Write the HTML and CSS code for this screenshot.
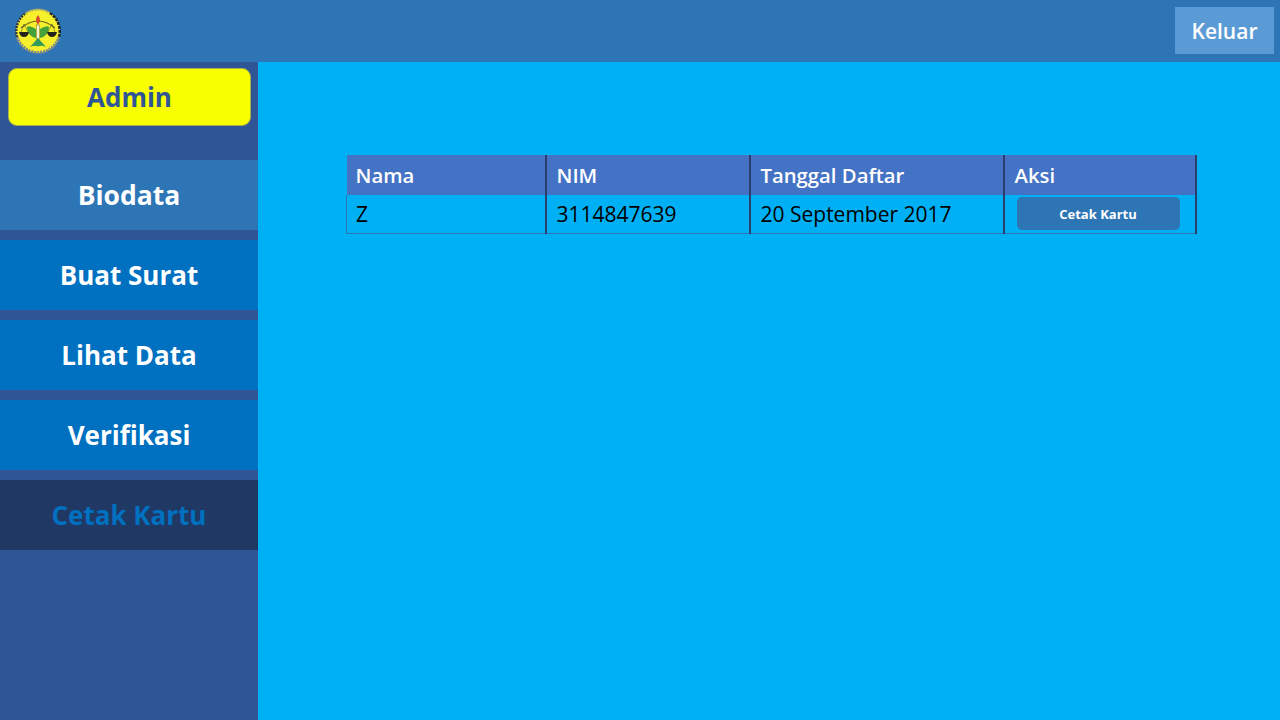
FILE: index.html
```html
<!DOCTYPE html>
<html lang="en">
<head>
    <meta charset="UTF-8">
    <meta name="viewport" content="width=device-width, initial-scale=1.0">
    <title>Cetak Kartu</title>
    <link rel="stylesheet" href="styles.css">
</head>
<body>
    <header class="topbar">
        <svg class="logo" width="50" height="50" viewBox="0 0 50 50">
            <circle cx="25" cy="25" r="22" fill="#f6f02c"/>
            <path d="M4 31 A22 22 0 0 1 13 7" fill="none" stroke="#34383c" stroke-width="2.4" stroke-dasharray="2 1"/>
            <path d="M13 7 A22 22 0 0 1 37 7" fill="none" stroke="#a0a070" stroke-width="2" stroke-dasharray="2 1"/>
            <path d="M37 7 A22 22 0 0 1 46 31" fill="none" stroke="#22252a" stroke-width="2.6" stroke-dasharray="3 1"/>
            <path d="M4 31 A22 22 0 0 0 46 31" fill="none" stroke="#7f858c" stroke-width="3" stroke-dasharray="2 1"/>
            <path d="M8 22 Q25 8 42 22" fill="none" stroke="#6b6a28" stroke-width="1.2"/>
            <path d="M11 18 L8 26 M11 18 L15 26 M39 18 L35 26 M39 18 L42 26" fill="none" stroke="#55552a" stroke-width=".6"/>
            <path d="M25 9 q4 4.500 0 10 q-4 -5.500 0 -10z" fill="#d8452c"/>
            <rect x="23.500" y="19" width="3" height="14" fill="#f4f4d0" stroke="#8a7a20" stroke-width=".6"/>
            <path d="M23 23 Q16 19 14 21 Q14 30 23 32z" fill="#45a23a"/>
            <path d="M27 23 Q34 19 36 21 Q36 30 27 32z" fill="#45a23a"/>
            <path d="M25 32 L17 41 Q22 39 25 40.500 Q28 39 33 41z" fill="#2f9a5a"/>
            <path d="M6 26 h10 q-1 5 -5 5 q-4 0 -5 -5z" fill="#23231a"/>
            <path d="M34 26 h10 q-1 5 -5 5 q-4 0 -5 -5z" fill="#23231a"/>
        </svg>
        <a class="logout" href="#">Keluar</a>
    </header>
    <div class="main">
        <nav class="sidebar">
            <div class="role">Admin</div>
            <a class="menu menu-biodata" href="#">Biodata</a>
            <a class="menu" href="#">Buat Surat</a>
            <a class="menu" href="#">Lihat Data</a>
            <a class="menu" href="#">Verifikasi</a>
            <a class="menu menu-active" href="#">Cetak Kartu</a>
        </nav>
        <section class="content">
            <table>
                <thead>
                    <tr>
                        <th class="col-nama">Nama</th>
                        <th class="col-nim">NIM</th>
                        <th class="col-tanggal">Tanggal Daftar</th>
                        <th class="col-aksi">Aksi</th>
                    </tr>
                </thead>
                <tbody>
                    <tr>
                        <td>Z</td>
                        <td>3114847639</td>
                        <td>20 September 2017</td>
                        <td><a class="print" href="#">Cetak Kartu</a></td>
                    </tr>
                </tbody>
            </table>
        </section>
    </div>
</body>
</html>
```

FILE: styles.css
```css
* {
    box-sizing: border-box;
}
body {
    margin: 0;
    height: 720px;
    overflow: hidden;
    font-family: "Open Sans", "Noto Sans", sans-serif;
    background-color: #00b0f5;
}
a {
    text-decoration: none;
}
.topbar {
    height: 62px;
    background-color: #2e75b6;
    display: flex;
    justify-content: space-between;
    align-items: center;
    padding: 0 6px 0 13px;
}
.logo {
    margin-top: -1px;
}
.logout {
    width: 99px;
    height: 47px;
    background-color: #5b9bd5;
    color: #fff;
    font-size: 21px;
    font-weight: 600;
    display: flex;
    align-items: center;
    justify-content: center;
    margin-top: -1px;
}
.main {
    display: flex;
    height: 658px;
}
.sidebar {
    width: 258px;
    background-color: #2f5597;
    padding-top: 6px;
}
.role {
    width: 243px;
    height: 58px;
    margin: 0 0 34px 8px;
    background-color: #f7ff00;
    border: 1px solid #a9b04a;
    border-radius: 9px;
    color: #2f5597;
    font-size: 26px;
    font-weight: 700;
    display: flex;
    align-items: center;
    justify-content: center;
}
.menu {
    height: 70px;
    margin-bottom: 10px;
    padding-bottom: 1px;
    background-color: #0070c0;
    color: #fff;
    font-size: 26px;
    font-weight: 700;
    display: flex;
    align-items: center;
    justify-content: center;
}
.menu-biodata {
    background-color: #2e75b6;
    font-size: 26.500px;
}
.menu-active {
    background-color: #203864;
    color: #0070c0;
}
.content {
    flex: 1;
    padding: 93px 0 0 88px;
}
table {
    width: 851px;
    border-collapse: collapse;
    table-layout: fixed;
    font-size: 21px;
    text-align: left;
}
.col-nama {
    width: 199px;
}
.col-nim {
    width: 204px;
}
.col-tanggal {
    width: 254px;
}
th, td {
    height: 38px;
    padding: 0 9px 0 10px;
    border-right: 2px solid #2a3f6e;
    border-bottom: 1px solid #2e75b6;
}
th {
    height: 40px;
    background-color: #4472c4;
    color: #fff;
    font-size: 20.300px;
    font-weight: 600;
    border-bottom: none;
}
td {
    color: #000;
    font-weight: 400;
}
th:first-child, td:first-child {
    padding-left: 9px;
}
td:first-child {
    border-left: 1px solid #2e75b6;
}
.print {
    display: flex;
    align-items: center;
    justify-content: center;
    width: 163px;
    height: 33px;
    margin-left: 2px;
    background-color: #2e75b6;
    border-radius: 5px;
    color: #fff;
    font-size: 13px;
    font-weight: 700;
}
```
